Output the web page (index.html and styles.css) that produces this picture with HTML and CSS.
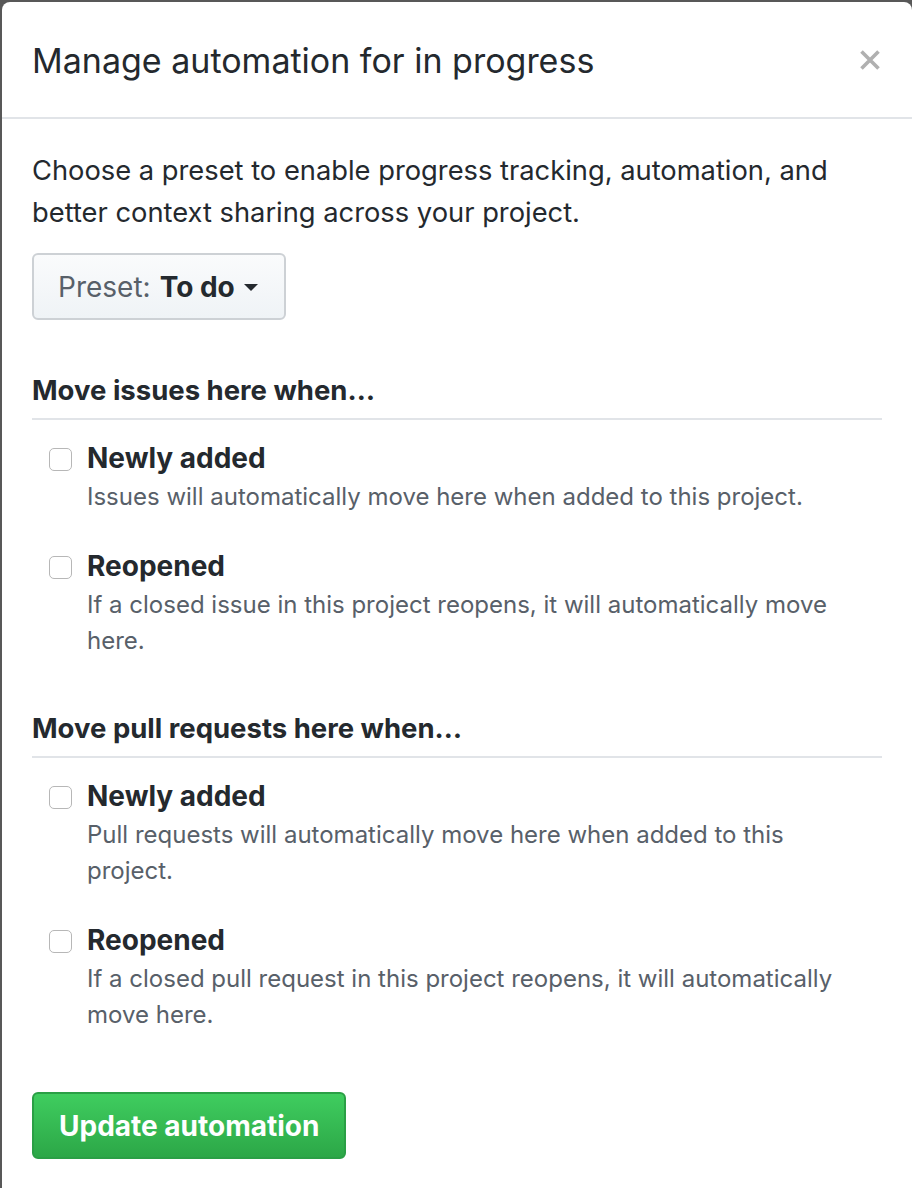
FILE: index.html
```html
<!DOCTYPE html>
<html lang="en">
<head>
<meta charset="utf-8">
<title>Manage automation</title>
<link rel="stylesheet" href="styles.css">
</head>
<body>
<div class="dialog">
  <header class="dialog-header">
    <h1 class="dialog-title">Manage automation for in progress</h1>
    <button class="close" aria-label="Close">
      <svg width="20" height="20" viewBox="0 0 20 20"><path d="M1.5 1.5L18.5 18.5M18.5 1.5L1.5 18.5" stroke="#b0b0b0" stroke-width="3.6" stroke-linecap="butt"/></svg>
    </button>
  </header>
  <div class="dialog-body">
    <p class="intro">Choose a preset to enable progress tracking, automation, and better context sharing across your project.</p>
    <button class="preset">Preset: <strong>To do</strong><span class="caret"></span></button>

    <section class="group">
      <h2 class="group-title">Move issues here when…</h2>
      <label class="option">
        <span class="checkbox"></span>
        <span class="option-text">
          <strong class="option-title">Newly added</strong>
          <span class="option-desc">Issues will automatically move here when added to this project.</span>
        </span>
      </label>
      <label class="option">
        <span class="checkbox"></span>
        <span class="option-text">
          <strong class="option-title">Reopened</strong>
          <span class="option-desc">If a closed issue in this project reopens, it will automatically move here.</span>
        </span>
      </label>
    </section>

    <section class="group">
      <h2 class="group-title">Move pull requests here when…</h2>
      <label class="option">
        <span class="checkbox"></span>
        <span class="option-text">
          <strong class="option-title">Newly added</strong>
          <span class="option-desc">Pull requests will automatically move here when added to this project.</span>
        </span>
      </label>
      <label class="option">
        <span class="checkbox"></span>
        <span class="option-text">
          <strong class="option-title">Reopened</strong>
          <span class="option-desc">If a closed pull request in this project reopens, it will automatically move here.</span>
        </span>
      </label>
    </section>

    <button class="primary">Update automation</button>
  </div>
</div>
</body>
</html>
```

FILE: styles.css
```css
html, body {
  margin: 0;
  padding: 0;
  background: #585858;
  height: 100%;
  overflow: hidden;
}
body {
  padding: 2px 0 0 2px;
  box-sizing: border-box;
  font-family: Inter, "Liberation Sans", sans-serif;
  color: #24292e;
}
.dialog {
  background: #fff;
  border-radius: 8px 8px 0 0;
  width: 910px;
  min-height: 1200px;
}
.dialog-header {
  display: flex;
  align-items: center;
  justify-content: space-between;
  height: 115px;
  padding: 0 30px 0 30px;
  border-bottom: 2px solid #e1e4e8;
}
.dialog-title {
  margin: 0;
  font-size: 34px;
  font-weight: 400;
  line-height: 40px;
  padding-top: 2px;
}
.close {
  border: 0;
  background: none;
  padding: 0;
  width: 24px;
  height: 24px;
  display: flex;
  align-items: center;
  justify-content: center;
  margin-right: 0;
}
.dialog-body {
  padding: 31px 30px 40px 30px;
}
.intro {
  margin: 0;
  font-size: 27.3px;
  line-height: 42px;
}
.preset {
  margin-top: 19px;
  height: 67px;
  padding: 0 26px 0 24px;
  border: 2px solid #cdd1d5;
  border-radius: 6px;
  background: linear-gradient(#fafbfc, #eff3f6);
  font-family: inherit;
  font-size: 28px;
  color: #586069;
  display: inline-flex;
  align-items: center;
}
.preset strong {
  color: #24292e;
  margin-left: 9px;
  font-weight: 700;
}
.caret {
  display: inline-block;
  width: 0;
  height: 0;
  border-left: 7px solid transparent;
  border-right: 7px solid transparent;
  border-top: 7px solid #24292e;
  margin-left: 9px;
  margin-top: 2px;
}
.group {
  margin-top: 49px;
}
.group + .group {
  margin-top: 48px;
}
.group-title {
  margin: 0;
  font-size: 27.5px;
  line-height: 42px;
  font-weight: 700;
  padding-bottom: 7px;
  border-bottom: 2px solid #e1e4e8;
}
.option {
  display: flex;
  gap: 15px;
  padding-left: 17px;
  padding-right: 32px;
  margin-top: 18px;
}
.option + .option {
  margin-top: 31px;
}
.checkbox {
  flex: none;
  width: 21px;
  height: 21px;
  border: 1.5px solid #b7b7b7;
  border-radius: 5px;
  background: #fff;
  margin-top: 10px;
}
.option-text {
  display: flex;
  flex-direction: column;
}
.option-title {
  font-size: 28px;
  line-height: 41px;
  font-weight: 700;
}
.option-desc {
  font-size: 24px;
  line-height: 36px;
  color: #586069;
}
.primary {
  margin-top: 59px;
  height: 67px;
  padding: 0 25px;
  border: 2px solid #2a9f45;
  border-radius: 6px;
  background: linear-gradient(#3fcd5f, #2ca747);
  color: #fff;
  font-family: inherit;
  font-size: 28px;
  font-weight: 700;
}
```
